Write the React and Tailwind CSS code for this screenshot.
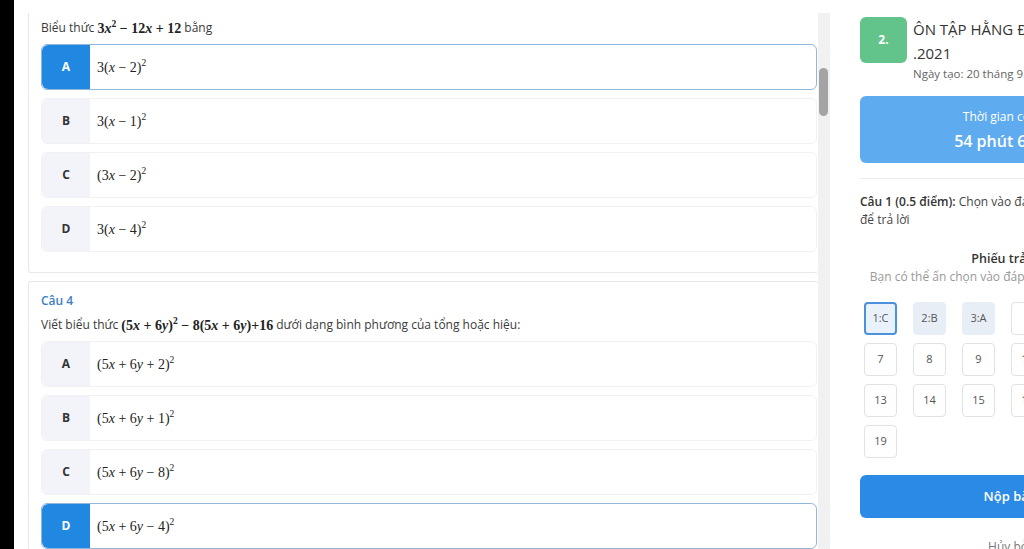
import React from "react";

const sans = { fontFamily: '"Open Sans", "Noto Sans", sans-serif' };

function V({ children }) {
  return <i className="italic">{children}</i>;
}

function Sq() {
  return <sup className="relative -top-[6px] text-[9.5px]">2</sup>;
}

function Math({ children, bold }) {
  return (
    <span
      className={`text-[14px] text-[#222] ${bold ? "font-semibold" : ""}`}
      style={{ fontFamily: '"Liberation Serif", "DejaVu Serif", serif' }}
    >
      {children}
    </span>
  );
}

function Option({ letter, selected, children }) {
  return (
    <div
      className={`flex h-[46px] items-stretch rounded-md border ${
        selected ? "border-[#93b6dc]" : "border-[#f1f1f3]"
      }`}
    >
      <div
        className={`flex w-[48px] shrink-0 items-center justify-center rounded-l-md text-[12px] font-bold ${
          selected ? "bg-[#2188e2] text-white" : "bg-[#f3f4f9] text-[#333]"
        }`}
      >
        {letter}
      </div>
      <div className="flex items-center pl-[7px]">
        <Math>{children}</Math>
      </div>
    </div>
  );
}

function Cell({ label, state }) {
  let cls = "bg-white border border-[#e2e2e2]";
  if (state === "current") cls = "bg-[#e9f1fb] border-2 border-[#4b91dc]";
  if (state === "done") cls = "bg-[#e8eef6] border border-[#e8eef6]";
  return (
    <div
      className={`flex h-[33px] w-[33px] items-center justify-center rounded-[4px] text-[11px] text-[#555] ${cls}`}
    >
      {label}
    </div>
  );
}

export default function App() {
  const cells = [];
  for (let i = 1; i <= 19; i++) {
    let label = String(i);
    let state = "";
    if (i === 1) {
      label = "1:C";
      state = "current";
    }
    if (i === 2) {
      label = "2:B";
      state = "done";
    }
    if (i === 3) {
      label = "3:A";
      state = "done";
    }
    cells.push({ label, state });
  }

  return (
    <div className="flex h-[549px] w-[1024px] overflow-hidden bg-white" style={sans}>
      <div className="w-[14px] shrink-0 bg-black" />

      {/* question list */}
      <div className="mt-[13px] flex w-[804px] shrink-0 overflow-hidden pl-[14px]">
        <div className="flex w-[790px] shrink-0 flex-col gap-[8px]">
          <div className="rounded-b-[3px] border border-t-0 border-r-0 border-[#e8e8e8] pl-[12px] pr-[1px] pt-[5px] pb-[20px]">
            <div className="flex h-[20px] items-center text-[12px] text-[#3a3a3a]">
              Biểu thức&nbsp;
              <Math bold>
                3<V>x</V>
                <Sq /> − 12<V>x</V> + 12
              </Math>
              &nbsp;bằng
            </div>
            <div className="mt-[6px] flex flex-col gap-[8px]">
              <Option letter="A" selected>
                3(<V>x</V> − 2)
                <Sq />
              </Option>
              <Option letter="B">
                3(<V>x</V> − 1)
                <Sq />
              </Option>
              <Option letter="C">
                (3<V>x</V> − 2)
                <Sq />
              </Option>
              <Option letter="D">
                3(<V>x</V> − 4)
                <Sq />
              </Option>
            </div>
          </div>

          <div className="rounded-t-[3px] border border-r-0 border-b-0 border-[#e8e8e8] pl-[12px] pr-[1px] pt-[9px]">
            <div className="flex h-[20px] items-center text-[12px] font-semibold text-[#3d7fc1]">
              Câu 4
            </div>
            <div className="mt-[4px] flex h-[20px] items-center text-[12px] text-[#3a3a3a]">
              Viết biểu thức&nbsp;
              <Math bold>
                (5<V>x</V> + 6<V>y</V>)
                <Sq /> − 8(5<V>x</V> + 6<V>y</V>)+16
              </Math>
              &nbsp;dưới dạng bình phương của tổng hoặc hiệu:
            </div>
            <div className="mt-[6px] flex flex-col gap-[8px]">
              <Option letter="A">
                (5<V>x</V> + 6<V>y</V> + 2)
                <Sq />
              </Option>
              <Option letter="B">
                (5<V>x</V> + 6<V>y</V> + 1)
                <Sq />
              </Option>
              <Option letter="C">
                (5<V>x</V> + 6<V>y</V> − 8)
                <Sq />
              </Option>
              <Option letter="D" selected>
                (5<V>x</V> + 6<V>y</V> − 4)
                <Sq />
              </Option>
            </div>
          </div>
        </div>
      </div>

      {/* scrollbar */}
      <div className="mt-[13px] w-[12px] shrink-0 bg-[#f1f1f1] pt-[55px] pl-[1px]">
        <div className="h-[48px] w-[9px] rounded-full bg-[#a4a4a4]" />
      </div>

      {/* right panel */}
      <div className="w-[326px] shrink-0 pl-[30px]">
        <div className="w-[296px]">
          <div className="mt-[17px] flex gap-[6px]">
            <div className="flex h-[46px] w-[47px] shrink-0 items-center justify-center rounded-md bg-[#63c48b] text-[12px] font-bold text-white">
              2.
            </div>
            <div>
              <div className="text-[15px] leading-[24px] text-[#333]">
                ÔN TẬP HẰNG ĐẲNG THỨC 20.9
                <br />
                .2021
              </div>
              <div className="text-[11.5px] leading-[17px] text-[#666]">
                Ngày tạo: 20 tháng 9 năm 2021
              </div>
            </div>
          </div>

          <div className="mt-[14px] flex h-[67px] flex-col items-center justify-center rounded-md bg-[#5eabef] text-white">
            <div className="text-[12px] leading-[18px]">Thời gian còn lại</div>
            <div className="mt-[4px] text-[16px] font-semibold leading-[22px]">
              54 phút 6 giây
            </div>
          </div>

          <div className="mt-[15px] border-t border-[#ececec]" />

          <div className="mt-[14px] text-[12px] leading-[18px] text-[#444]">
            <span className="font-semibold text-[#333]">Câu 1 (0.5 điểm):</span> Chọn vào đáp án đúng
            <br />
            để trả lời
          </div>

          <div className="mt-[21px] text-center text-[12.5px] font-semibold leading-[18px] text-[#333]">
            Phiếu trả lời
          </div>
          <div className="whitespace-nowrap text-center text-[12px] leading-[18px] text-[#999]">
            Bạn có thể ấn chọn vào đáp án để chuyển câu hỏi
          </div>

          <div className="mt-[16px] grid grid-cols-[repeat(6,33px)] gap-x-[16px] gap-y-[8px] pl-[4px]">
            {cells.map((c) => (
              <Cell key={c.label} label={c.label} state={c.state} />
            ))}
          </div>

          <div className="mt-[17px] flex h-[43px] items-center justify-center rounded-md bg-[#2b8ae6] text-[13px] font-semibold text-white">
            Nộp bài
          </div>
          <div className="mt-[20px] text-center text-[12px] text-[#777]">Hủy bỏ</div>
        </div>
      </div>
    </div>
  );
}
